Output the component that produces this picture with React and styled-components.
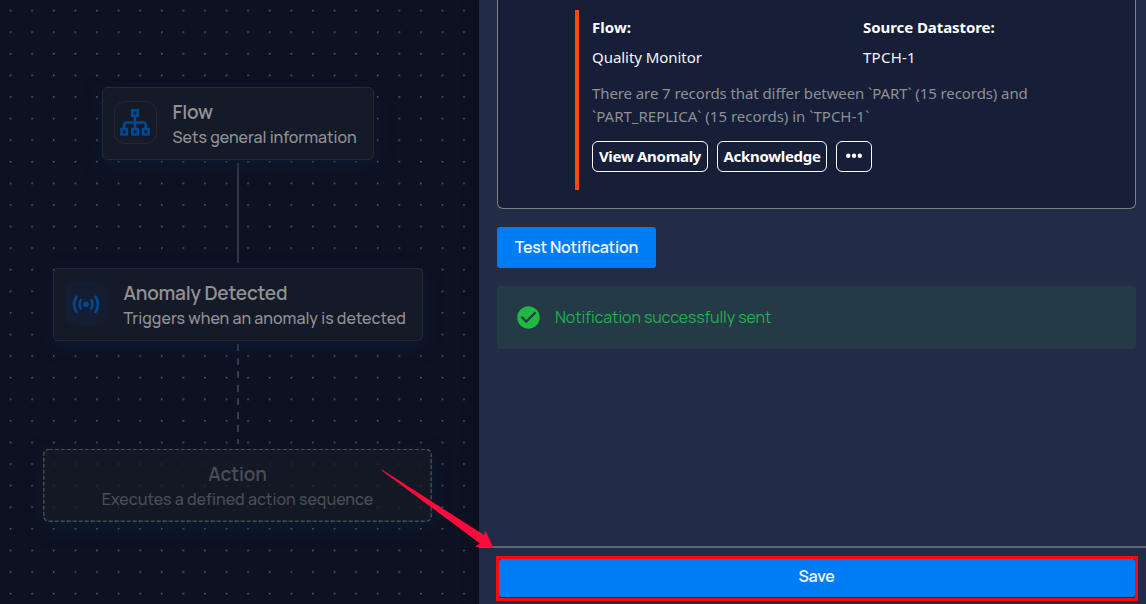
import React from "react";
import styled, { createGlobalStyle } from "styled-components";

const GlobalStyle = createGlobalStyle`
  * { box-sizing: border-box; }
  body { margin: 0; background: #0c1222; }
  button { margin: 0; cursor: pointer; }
`;

const ui = `"Manrope", "Inter", sans-serif`;
const message = `"Segoe UI", "Noto Sans", "Open Sans", sans-serif`;

const Screen = styled.div`
  position: relative;
  display: flex;
  width: 1146px;
  height: 604px;
  overflow: hidden;
  font-family: ${ui};
`;

const Canvas = styled.section`
  width: 479px;
  flex: none;
  display: flex;
  flex-direction: column;
  align-items: center;
  padding: 87px 4px 0 0;
  background-color: #0c1222;
  background-image: radial-gradient(circle at 10.6px 10.6px, #63666d 0.5px, transparent 1.1px);
  background-size: 21.6px 21.6px;
`;

const Node = styled.div`
  display: flex;
  align-items: center;
  justify-content: ${(p) => (p.$placeholder ? "center" : "flex-start")};
  gap: 16px;
  flex: none;
  width: ${(p) => p.$width}px;
  height: 73px;
  padding: ${(p) => (p.$placeholder ? "2px 11px 0" : "1px 11px 0")};
  border: ${(p) => (p.$placeholder ? "0" : "1px solid #242935")};
  border-radius: 5px;
  background: ${(p) => (p.$placeholder ? "rgba(21, 27, 38, 0.8)" : "#151a29")};
  box-shadow: 0 5px 17px rgba(16, 34, 66, 0.5);
  text-align: ${(p) => (p.$placeholder ? "center" : "left")};
  color: ${(p) => (p.$placeholder ? "#4a4d55" : "#919193")};
  position: relative;
`;

const DashedOutline = styled.svg`
  position: absolute;
  left: 0;
  top: 0;
`;

const IconTile = styled.div`
  display: grid;
  place-items: center;
  width: 43px;
  height: 43px;
  flex: none;
  margin-top: -4px;
  border: 1px solid ${(p) => (p.$filled ? "#151d33" : "#232733")};
  border-radius: 11px;
  background: ${(p) => (p.$filled ? "#151d33" : "transparent")};
`;

const NodeTitle = styled.div`
  padding-top: 1px;
  font-size: 19px;
  line-height: 25px;
  font-weight: 600;
  letter-spacing: ${(p) => p.$track}px;
  white-space: nowrap;
`;

const NodeText = styled.div`
  font-size: 16px;
  line-height: 25px;
  font-weight: 500;
  letter-spacing: ${(p) => p.$track}px;
  white-space: nowrap;
`;

const Connector = styled.div`
  width: 2px;
  height: 100px;
  flex: none;
  margin: 3px 0 5px 1px;
  background: ${(p) =>
    p.$dashed
      ? "repeating-linear-gradient(#383c43 0 7px, transparent 7px 13.5px)"
      : "#343843"};
`;

const Panel = styled.aside`
  position: relative;
  flex: 1;
  display: flex;
  flex-direction: column;
  background: #232c47;
  box-shadow: 0 0 12px rgba(5, 8, 18, 0.55);
`;

const PanelBody = styled.div`
  flex: 1;
  display: flex;
  flex-direction: column;
  align-items: flex-start;
  padding: 0 10px 0 18px;
`;

const Preview = styled.article`
  width: 639px;
  height: 209px;
  padding: 10px 0 18px 77px;
  border: 1px solid #7d7f84;
  border-top: 0;
  border-radius: 0 0 6px 6px;
  background: #161e38;
  font-family: ${message};
  color: #f4f5f7;
`;

const Attachment = styled.div`
  height: 180px;
  padding: 6px 0 0 13px;
  border-left: 4px solid #ff4713;
`;

const Fields = styled.dl`
  display: grid;
  grid-template-columns: 271px 200px;
  margin: 0;
  font-size: 15px;
  line-height: 23px;
`;

const FieldName = styled.dt`
  font-weight: 700;
  color: #fff;
  letter-spacing: ${(p) => p.$track}px;
`;

const FieldValue = styled.dd`
  margin: 7px 0 0;
  letter-spacing: ${(p) => p.$track}px;
`;

const Description = styled.p`
  margin: 13px 0;
  font-size: 15px;
  line-height: 23px;
  color: #8f9093;
`;

const Line = styled.span`
  display: block;
  white-space: nowrap;
  letter-spacing: ${(p) => p.$track}px;
`;

const Actions = styled.div`
  display: flex;
  gap: 9px;
`;

const MessageButton = styled.button`
  display: grid;
  place-items: center;
  width: ${(p) => p.$width}px;
  height: 31px;
  padding: 0 0 2px;
  border: 1px solid #fff;
  border-radius: 6px;
  background: transparent;
  color: #fff;
  font: 700 15px ${message};
  letter-spacing: ${(p) => p.$track || 0}px;
  white-space: nowrap;
`;

const PrimaryButton = styled.button`
  display: grid;
  place-items: center;
  width: ${(p) => (p.$wide ? "100%" : "159px")};
  height: ${(p) => (p.$wide ? 38 : 41)}px;
  margin-top: ${(p) => (p.$wide ? 0 : 18)}px;
  padding: 0 ${(p) => (p.$wide ? "1px 4px 0" : "0 2px")};
  border: 0;
  border-radius: 3px;
  background: #007df5;
  color: #f1f7ff;
  font: 600 16px ${ui};
  letter-spacing: ${(p) => p.$track}px;
`;

const Alert = styled.div`
  display: flex;
  align-items: center;
  gap: 13px;
  width: 639px;
  height: 63px;
  margin-top: 18px;
  padding-left: 18px;
  border-radius: 4px;
  background: #243a46;
  color: #22b14a;
  font-size: 16px;
  letter-spacing: ${(p) => p.$track}px;

  span { padding-bottom: 2px; }
`;

const Footer = styled.footer`
  height: 58px;
  padding: 8px 8px 0 17px;
  border-top: 2px solid #5f6578;
`;

const Highlight = styled.div`
  height: 45px;
  border: 3px solid #fb0a0c;
`;

const Pointer = styled.svg`
  position: absolute;
  left: 380px;
  top: 468px;
`;

function SitemapIcon() {
  return (
    <svg width="30" height="28" viewBox="0 0 30 28" fill="none" stroke="#004a91" strokeWidth="2.6">
      <rect x="12.3" y="2.3" width="5.4" height="5.4" />
      <rect x="1.5" y="21" width="5.4" height="5.4" />
      <rect x="12.3" y="21" width="5.4" height="5.4" />
      <rect x="23.1" y="21" width="5.4" height="5.4" />
      <path d="M15 8V20.5M4.2 20.5V16.7Q4.2 14.5 6.4 14.5H23.6Q25.8 14.5 25.8 16.7V20.5" />
    </svg>
  );
}

function BroadcastIcon() {
  return (
    <svg width="28" height="22" viewBox="0 0 28 22" fill="none" stroke="#004a91" strokeWidth="2.5">
      <circle cx="14" cy="12.3" r="2.9" fill="#004a91" stroke="none" />
      <path d="M5 3.7Q-1 12.3 5 20.9M23 3.7Q29 12.3 23 20.9M9.3 7.3Q5.6 12.3 9.3 17.3M18.7 7.3Q22.4 12.3 18.7 17.3" />
    </svg>
  );
}

function SuccessIcon() {
  return (
    <svg width="27" height="27" viewBox="0 0 24 24">
      <path
        fill="#22b845"
        d="M12 2C6.5 2 2 6.5 2 12s4.5 10 10 10 10-4.5 10-10S17.5 2 12 2m-2 15-5-5 1.41-1.41L10 14.17l7.59-7.59L19 8z"
      />
    </svg>
  );
}

function DotsIcon() {
  return (
    <svg width="18" height="6" viewBox="0 0 18 6" fill="#fff">
      <circle cx="3.2" cy="2.7" r="2.2" />
      <circle cx="9" cy="2.7" r="2.2" />
      <circle cx="14.8" cy="2.7" r="2.2" />
    </svg>
  );
}

export default function App() {
  return (
    <Screen>
      <GlobalStyle />
      <Canvas>
        <Node $width={272}>
          <IconTile><SitemapIcon /></IconTile>
          <div>
            <NodeTitle $track={-0.15}>Flow</NodeTitle>
            <NodeText $track={-0.03}>Sets general information</NodeText>
          </div>
        </Node>
        <Connector />
        <Node $width={370}>
          <IconTile $filled><BroadcastIcon /></IconTile>
          <div>
            <NodeTitle $track={-0.2}>Anomaly Detected</NodeTitle>
            <NodeText $track={0}>Triggers when an anomaly is detected</NodeText>
          </div>
        </Node>
        <Connector $dashed />
        <Node $width={389} $placeholder>
          <DashedOutline width="389" height="73" viewBox="0 0 389 73">
            <rect
              x="0.8" y="0.4" width="387.4" height="71.8" rx="5"
              fill="none" stroke="#484c54" strokeWidth="1.4" strokeDasharray="4 2"
            />
          </DashedOutline>
          <div>
            <NodeTitle $track={-0.2}>Action</NodeTitle>
            <NodeText $track={0}>Executes a defined action sequence</NodeText>
          </div>
        </Node>
      </Canvas>
      <Panel>
        <PanelBody>
          <Preview>
            <Attachment>
              <Fields>
                <FieldName $track={0.05}>Flow:</FieldName>
                <FieldName $track={-0.07}>Source Datastore:</FieldName>
                <FieldValue $track={-0.05}>Quality Monitor</FieldValue>
                <FieldValue $track={0.25}>TPCH-1</FieldValue>
              </Fields>
              <Description>
                <Line $track={-0.09}>There are 7 records that differ between `PART` (15 records) and</Line>
                <Line $track={0}>`PART_REPLICA` (15 records) in `TPCH-1`</Line>
              </Description>
              <Actions>
                <MessageButton $width={116} $track={-0.3}>View Anomaly</MessageButton>
                <MessageButton $width={110} $track={-0.3}>Acknowledge</MessageButton>
                <MessageButton $width={36} aria-label="More"><DotsIcon /></MessageButton>
              </Actions>
            </Attachment>
          </Preview>
          <PrimaryButton $track={-0.25}>Test Notification</PrimaryButton>
          <Alert $track={-0.1}>
            <SuccessIcon />
            <span>Notification successfully sent</span>
          </Alert>
        </PanelBody>
        <Footer>
          <Highlight>
            <PrimaryButton $wide $track={-0.2}>Save</PrimaryButton>
          </Highlight>
        </Footer>
      </Panel>
      <Pointer width="116" height="82" viewBox="0 0 116 82" fill="#ff0a3c">
        <path d="M1 1.5L3 2.2L104 67L105.7 63L113.5 80L94.7 78.7L100 75.5L3 3.4Z" />
      </Pointer>
    </Screen>
  );
}
